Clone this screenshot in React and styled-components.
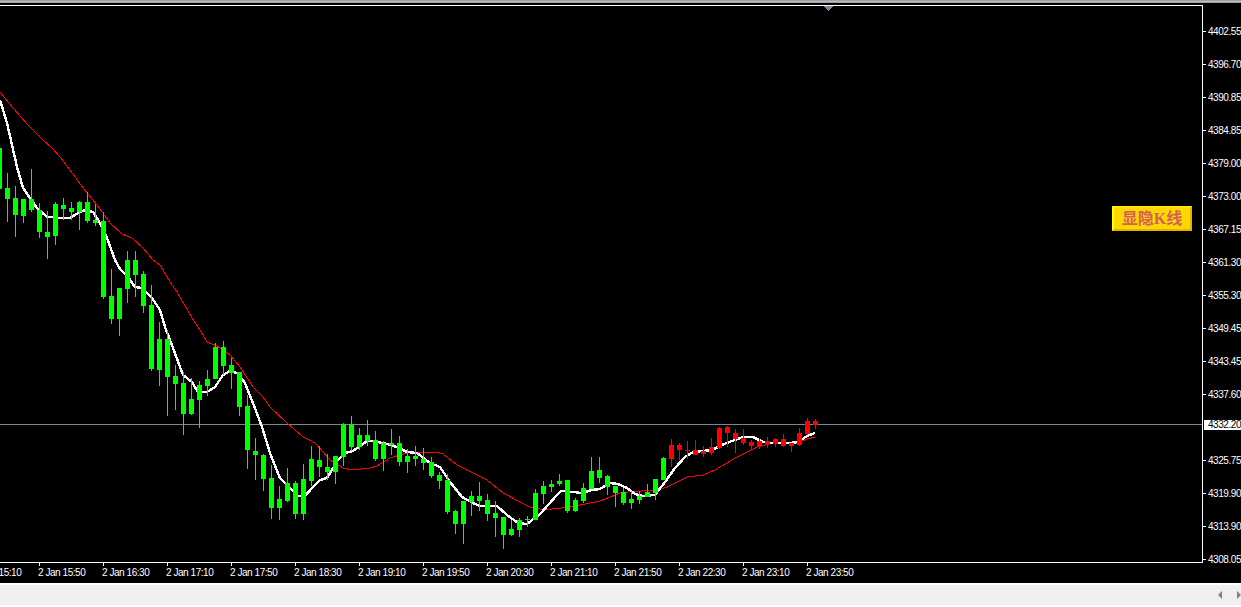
import React from "react";
import styled, { createGlobalStyle } from "styled-components";

const GlobalStyle = createGlobalStyle`
  html, body {
    margin: 0;
    height: 100%;
    overflow: hidden;
    background: #000;
  }
`;

// x of candle i is 8 * i - 1, values are [bodyTop, bodyBottom, wickHigh, wickLow] in page pixels
const CANDLES = [
  [148, 189, 148, 189], [188, 199, 173, 222], [198, 215, 186, 237], [199, 216, 199, 223],
  [199, 210, 169, 212], [210, 232, 203, 238], [232, 237, 211, 259], [204, 236, 202, 245],
  [205, 209, 198, 220], [208, 212, 202, 220], [202, 212, 201, 230], [202, 221, 192, 223],
  [220, 223, 204, 226], [221, 297, 212, 299], [296, 319, 269, 324], [288, 319, 288, 336],
  [260, 289, 251, 303], [260, 275, 251, 297], [274, 306, 271, 313], [305, 369, 285, 371],
  [339, 370, 322, 386], [339, 377, 330, 416], [376, 384, 365, 410], [383, 414, 372, 435],
  [399, 414, 378, 415], [385, 400, 381, 428], [379, 386, 370, 396], [347, 379, 343, 379],
  [347, 366, 341, 375], [365, 373, 358, 389], [372, 407, 372, 416], [406, 450, 395, 469],
  [451, 455, 438, 480], [455, 479, 454, 491], [478, 508, 465, 519], [499, 508, 486, 520],
  [483, 501, 468, 502], [483, 514, 481, 519], [479, 514, 464, 520], [459, 481, 446, 486],
  [460, 467, 446, 477], [467, 472, 454, 480], [456, 472, 456, 484], [424, 457, 423, 466],
  [424, 447, 416, 451], [435, 447, 428, 450], [435, 441, 420, 446], [440, 459, 431, 461],
  [443, 459, 441, 471], [443, 445, 429, 455], [443, 462, 436, 466], [456, 462, 449, 473],
  [456, 459, 446, 466], [459, 463, 448, 470], [462, 476, 457, 478], [475, 481, 472, 489],
  [480, 512, 474, 514], [511, 524, 510, 534], [501, 524, 501, 544], [496, 502, 491, 516],
  [496, 501, 482, 511], [500, 514, 494, 521], [513, 518, 501, 537], [517, 535, 517, 549],
  [529, 535, 520, 536], [520, 530, 518, 537], [519, 520, 516, 527], [493, 520, 489, 520],
  [486, 494, 481, 504], [484, 487, 480, 492], [481, 484, 474, 486], [480, 511, 480, 513],
  [500, 511, 498, 512], [488, 501, 483, 503], [471, 489, 457, 489], [470, 478, 457, 483],
  [476, 487, 475, 495], [486, 493, 486, 507], [492, 503, 488, 505], [499, 503, 491, 509],
  [496, 500, 491, 504], [492, 497, 484, 497], [479, 493, 479, 500], [458, 480, 457, 480],
  [445, 459, 439, 467], [445, 450, 443, 460], [450, 451, 441, 459], [450, 455, 440, 455],
  [451, 454, 446, 457], [447, 453, 438, 455], [428, 448, 427, 449], [427, 433, 426, 447],
  [433, 439, 429, 453], [438, 443, 429, 445], [442, 446, 440, 449], [441, 446, 439, 449],
  [441, 444, 437, 448], [439, 444, 438, 447], [439, 446, 434, 447], [443, 446, 443, 452],
  [433, 445, 428, 446], [421, 434, 418, 435], [421, 425, 419, 429],
];

const FIRST_RED = 84;

const WHITE_MA =
  "0,100 7,123 12,145 17,167 23,188 30,198 37,208 47,217 53,217 60,218 70,218 78,213 85,210 93,212 100,223 " +
  "107,238 115,260 120,269 128,277 135,287 142,288 147,293 152,298 160,310 165,327 173,348 183,375 192,382 " +
  "198,392 207,392 215,387 223,375 230,371 237,373 245,383 253,403 262,427 270,453 280,478 290,488 298,496 " +
  "305,496 313,487 320,480 327,478 338,460 345,453 353,451 367,441 373,441 387,444 397,447 407,452 417,453 " +
  "430,463 440,467 450,482 462,497 473,503 480,506 497,506 507,515 518,523 527,524 540,514 557,495 561,491 " +
  "573,492 582,493 592,490 600,489 610,483 618,484 627,488 635,494 643,496 655,495 665,482 675,468 685,457 " +
  "693,452 712,450 722,445 732,441 743,437 753,437 763,442 773,443 790,443 798,442 807,436 815,433";

const RED_MA =
  "0,92 13,108 28,125 43,140 52,148 60,157 70,170 83,188 97,205 110,223 122,234 132,238 143,248 153,260 160,265 " +
  "170,282 177,292 192,318 200,330 207,342 217,346 230,355 240,367 253,387 263,397 270,407 287,423 303,437 " +
  "315,443 330,460 343,468 352,470 370,468 377,466 390,458 403,454 413,452 435,452 443,454 457,465 487,480 " +
  "503,493 520,502 530,507 540,509 552,509 570,507 600,501 620,493 628,492 657,490 667,487 687,477 703,475 " +
  "715,470 737,457 757,447 773,443 797,443 807,439 815,437";

const PRICES = [
  "4402.55", "4396.70", "4390.85", "4384.85", "4379.00", "4373.00", "4367.15", "4361.30", "4355.30",
  "4349.45", "4343.45", "4337.60", "", "4325.75", "4319.90", "4313.90", "4308.05",
];

const TIMES = [
  "15:10", "15:50", "16:30", "17:10", "17:50", "18:30", "19:10", "19:50", "20:30", "21:10", "21:50", "22:30",
  "23:10", "23:50",
];

const Page = styled.div`
  width: 1241px;
  height: 607px;
  display: flex;
  flex-direction: column;
  background: #000;
  font-family: "Liberation Sans", Arial, sans-serif;
  font-size: 10px;
  letter-spacing: -0.45px;
  color: #fff;
  overflow: hidden;
`;

const TopEdge = styled.div`
  flex: 0 0 3px;
  margin-bottom: 2px;
  background: linear-gradient(#8a8a8a, #c4c4c4 45%, #8c8c8c);
`;

const ChartRow = styled.div`
  position: relative;
  flex: 0 0 558px;
  min-height: 0;
  display: flex;
`;

const Plot = styled.div`
  width: 1202px;
  height: 556px;
  border-top: 1px solid #fff;
  border-right: 1px solid #fff;
  border-bottom: 1px solid #fff;
`;

const ChartSvg = styled.svg`
  display: block;
  width: 1202px;
  height: 556px;
`;

const PriceAxis = styled.div`
  display: flex;
  flex-direction: column;
  padding-top: 10px;
`;

const PriceCell = styled.div`
  flex: 0 0 33px;
  display: flex;
  align-items: center;
  gap: 2px;
  white-space: nowrap;
`;

const PriceTick = styled.span`
  width: 3px;
  height: 1px;
  background: ${({ $hidden }) => ($hidden ? "transparent" : "#fff")};
`;

const CurrentPrice = styled.div`
  position: absolute;
  left: 1204px;
  top: 415px;
  width: 33px;
  height: 10px;
  padding-left: 4px;
  background: #fff;
  color: #000;
  line-height: 10px;
`;

const ToggleButton = styled.button`
  position: absolute;
  left: 1112px;
  top: 201px;
  width: 80px;
  height: 25px;
  padding: 0;
  box-sizing: border-box;
  background: #ffd700;
  border-style: solid;
  border-width: 2px;
  border-color: #ffe800 #e2b400 #e2b400 #ffff00;
  color: #d2605a;
  font-family: "Liberation Serif", "Noto Sans CJK SC", serif;
  font-size: 16px;
  font-weight: 700;
  letter-spacing: 0;
  line-height: 21px;
  white-space: nowrap;
`;

const TimeAxis = styled.div`
  flex: 0 0 20px;
  display: flex;
  margin-left: -25px;
`;

const TimeCell = styled.div`
  flex: 0 0 64px;
  white-space: nowrap;
  &::before {
    content: "";
    display: block;
    width: 1px;
    height: 3px;
    background: #fff;
  }
`;

const TimeLabel = styled.span`
  display: block;
  line-height: 12px;
  margin: 1px 0 0 -1px;
`;

const StatusStrip = styled.div`
  flex: 0 0 20px;
  display: flex;
  align-items: center;
  justify-content: flex-end;
  gap: 15px;
  border-top: 2px solid #fff;
  border-bottom: 2px solid #fff;
  background: #efefef;
`;

const ScrollArrow = styled.span`
  width: 0;
  height: 0;
  border-top: 4px solid transparent;
  border-bottom: 4px solid transparent;
  border-left: ${({ $dir }) => ($dir === "right" ? "4px solid #808080" : "0")};
  border-right: ${({ $dir }) => ($dir === "left" ? "4px solid #808080" : "0")};
`;

const Candle = ({ index, values }) => {
  const [top, bottom, high, low] = values;
  const x = 8 * index - 1;
  const color = index >= FIRST_RED ? "#ff0000" : "#00ff00";
  return (
    <g fill={color}>
      <rect x={x} y={high} width="1" height={low - high} />
      <rect x={x - 2} y={top} width="5" height={Math.max(bottom - top, 1)} />
    </g>
  );
};

const App = () => {
  return (
    <Page>
      <GlobalStyle />
      <TopEdge />
      <ChartRow>
        <Plot>
          <ChartSvg viewBox="0 6 1202 556" shapeRendering="crispEdges">
            <rect x="0" y="424" width="1202" height="1" fill="#778899" />
            <polygon points="823,6 833,6 828,11" fill="#778899" />
            <polyline points={RED_MA} fill="none" stroke="#ff0000" strokeWidth="1" />
            <polyline points={WHITE_MA} fill="none" stroke="#ffffff" strokeWidth="2.4" />
            {CANDLES.map((values, index) => (
              <Candle key={index} index={index} values={values} />
            ))}
          </ChartSvg>
        </Plot>
        <PriceAxis>
          {PRICES.map((price, index) => (
            <PriceCell key={index}>
              <PriceTick $hidden={!price} />
              {price}
            </PriceCell>
          ))}
        </PriceAxis>
        <CurrentPrice>4332.20</CurrentPrice>
        <ToggleButton type="button">显隐K线</ToggleButton>
      </ChartRow>
      <TimeAxis>
        {TIMES.map((time) => (
          <TimeCell key={time}>
            <TimeLabel>2 Jan {time}</TimeLabel>
          </TimeCell>
        ))}
      </TimeAxis>
      <StatusStrip>
        <ScrollArrow $dir="left" />
        <ScrollArrow $dir="right" />
      </StatusStrip>
    </Page>
  );
};

export default App;
